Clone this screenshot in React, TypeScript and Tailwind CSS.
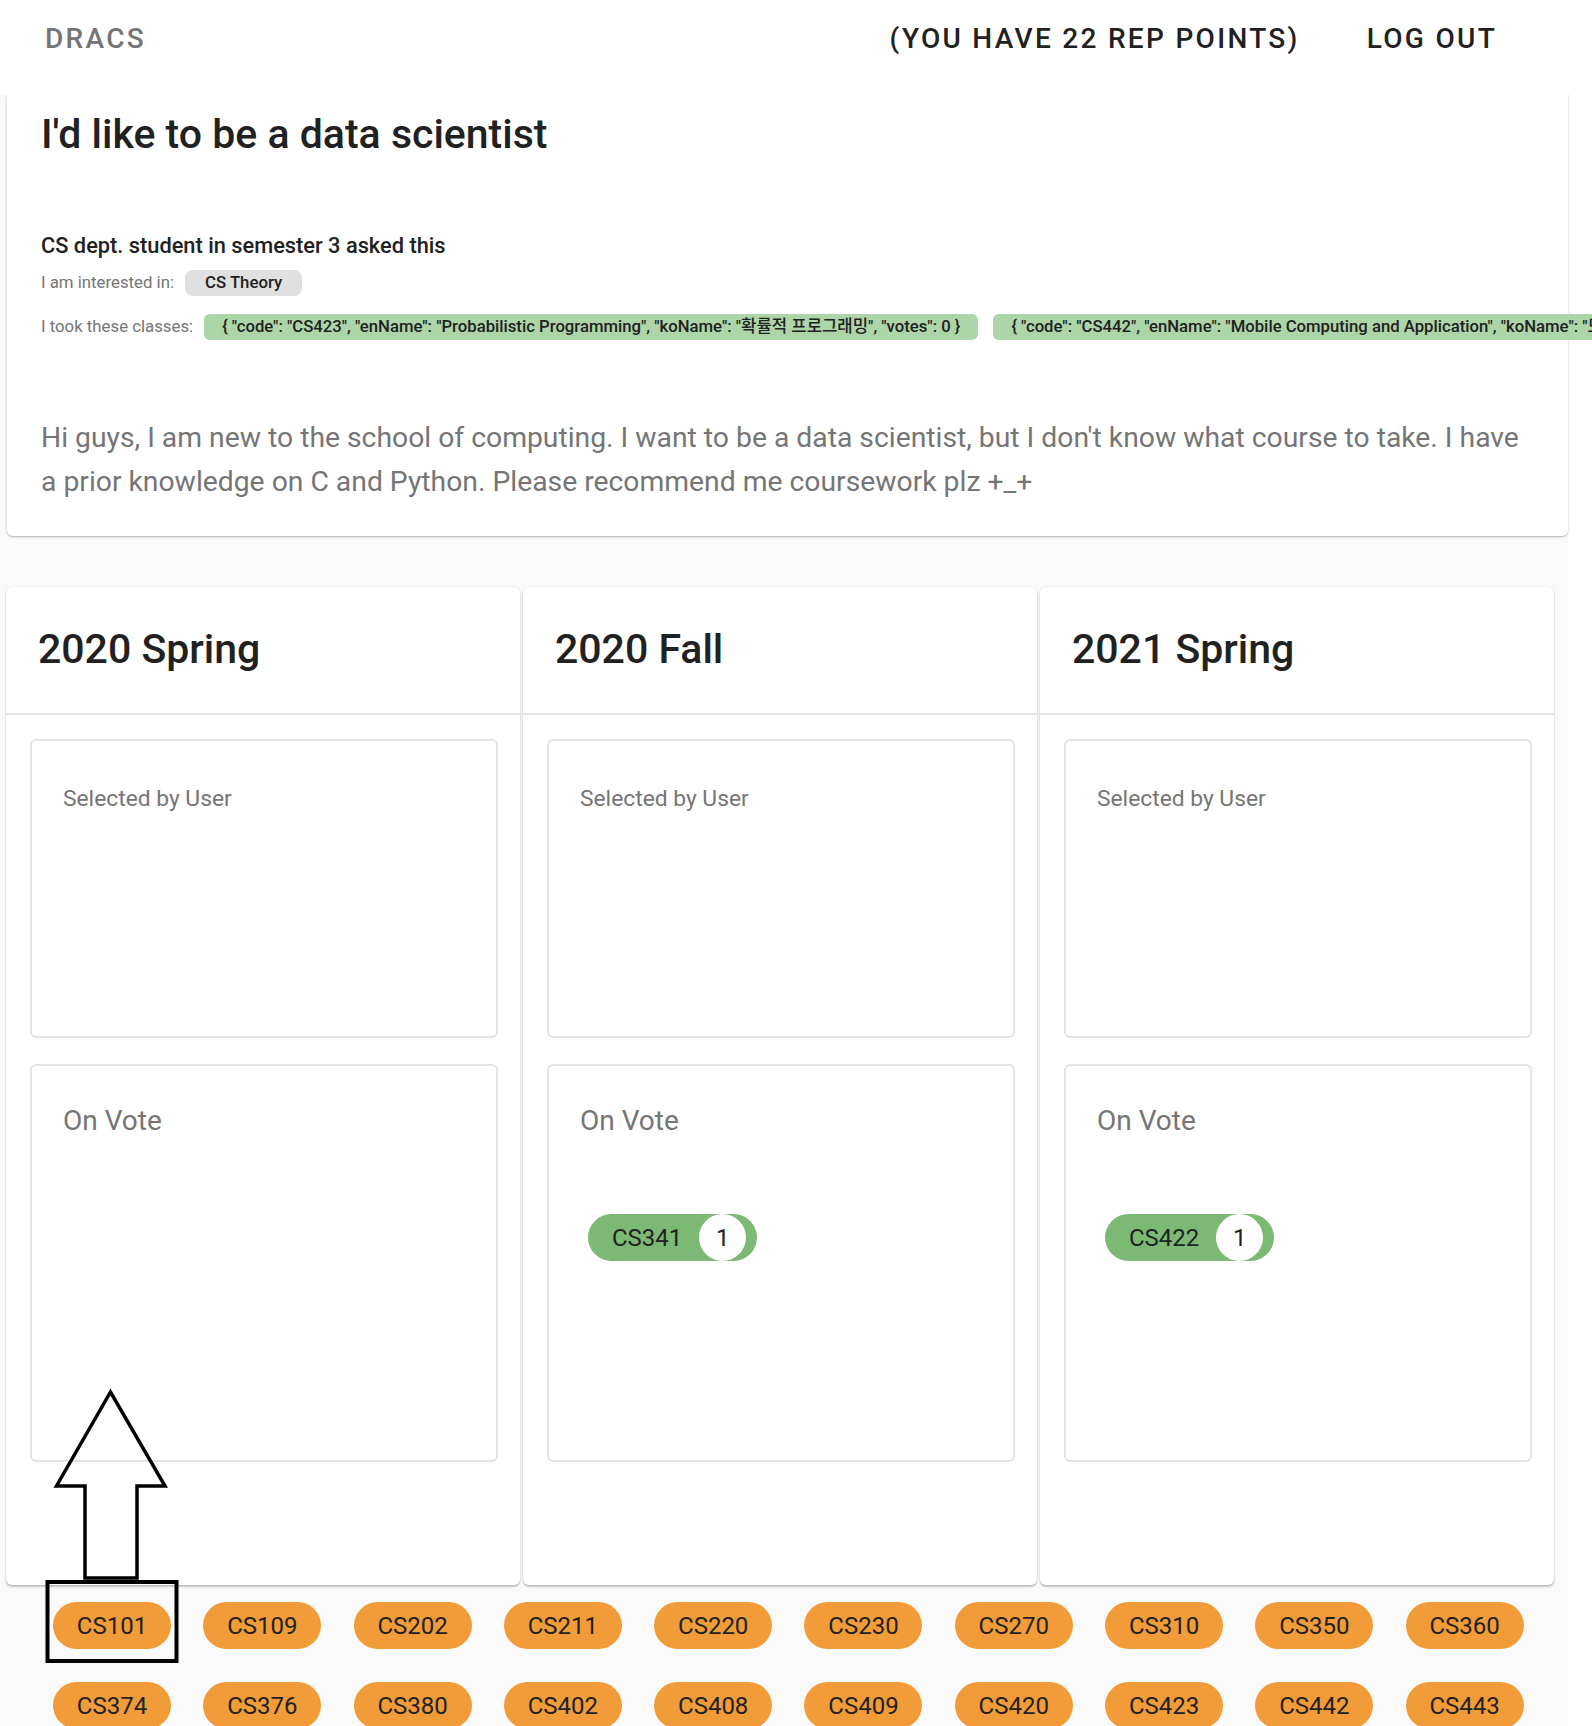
const roboto = { fontFamily: "Roboto, 'Noto Sans CJK KR', sans-serif" };

const semesters = [
  { name: "2020 Spring", votes: [] as { code: string; count: number }[] },
  { name: "2020 Fall", votes: [{ code: "CS341", count: 1 }] },
  { name: "2021 Spring", votes: [{ code: "CS422", count: 1 }] },
];

const courses = [
  "CS101", "CS109", "CS202", "CS211", "CS220", "CS230", "CS270", "CS310", "CS350", "CS360",
  "CS374", "CS376", "CS380", "CS402", "CS408", "CS409", "CS420", "CS423", "CS442", "CS443",
];

const takenClasses = [
  '{ "code": "CS423", "enName": "Probabilistic Programming", "koName": "확률적 프로그래밍", "votes": 0 }',
  '{ "code": "CS442", "enName": "Mobile Computing and Application", "koName": "모바일 컴퓨팅 및 응용", "votes": 0 }',
];

function Header() {
  return (
    <header className="h-[94px] bg-white relative z-10">
      <div className="h-[77px] flex items-center pl-[45px] pr-[95px]">
        <span className="text-[28px] tracking-[2.3px] text-[#757575] font-medium">DRACS</span>
        <div className="ml-auto flex items-center gap-[67px] text-[28px] tracking-[2.3px] text-[#212121] font-medium">
          <span>(YOU HAVE 22 REP POINTS)</span>
          <span>LOG OUT</span>
        </div>
      </div>
    </header>
  );
}

function QuestionCard() {
  return (
    <div className="ml-[7px] w-[1561px] bg-white rounded-b-[6px] shadow-[0_1px_3px_rgba(0,0,0,0.2),0_1px_1px_rgba(0,0,0,0.12)] pl-[34px] pt-[16px] pb-[32px]">
      <h1 className="text-[41px] leading-[48px] font-medium text-[#212121]">I'd like to be a data scientist</h1>

      <div className="mt-[74px] text-[21.8px] leading-[28px] font-medium text-[#212121]">
        CS dept. student in semester 3 asked this
      </div>

      <div className="mt-[10px] flex items-center h-[26px]">
        <span className="text-[16.8px] text-[#757575]">I am interested in:</span>
        <span className="ml-[11px] h-[26px] px-[20px] flex items-center rounded-[8px] bg-[#e0e0e0] text-[16.8px] font-medium text-[#212121]">
          CS Theory
        </span>
      </div>

      <div className="mt-[18px] flex items-center h-[26px] whitespace-nowrap">
        <span className="text-[16.8px] text-[#757575]">I took these classes:</span>
        <div className="ml-[11px] flex gap-[15px]">
          {takenClasses.map((c) => (
            <span
              key={c}
              className="h-[26px] px-[18px] flex items-center rounded-[6px] bg-[#acd5a8] text-[16.7px] font-medium text-[#212121]"
            >
              {c}
            </span>
          ))}
        </div>
      </div>

      <p className="mt-[76px] w-[1494px] text-[28.3px] leading-[44px] text-[#757575]">
        Hi guys, I am new to the school of computing. I want to be a data scientist, but I don't know what course to take. I have a prior knowledge on C and Python. Please recommend me coursework plz +_+
      </p>
    </div>
  );
}

function VoteChip({ code, count }: { code: string; count: number }) {
  return (
    <div className="inline-flex items-center h-[47px] rounded-full bg-[#7cb974] pl-[24px] pr-[11px]">
      <span className="text-[24px] text-[#212121]">{code}</span>
      <span className="ml-[17px] w-[47px] h-[47px] rounded-full bg-white flex items-center justify-center text-[24px] text-[#212121]">
        {count}
      </span>
    </div>
  );
}

function SemesterCard({ name, votes }: { name: string; votes: { code: string; count: number }[] }) {
  return (
    <div className="h-[998px] bg-white rounded-[6px] shadow-[0_2px_2px_rgba(0,0,0,0.22),0_0_2px_rgba(0,0,0,0.12)] flex flex-col">
      <div className="h-[128px] border-b-2 border-[#e4e4e4] flex items-center pl-[32px]">
        <h2 className="text-[41px] font-medium text-[#212121]">{name}</h2>
      </div>
      <div className="ml-[24px] mr-[22px] mt-[24px] h-[299px] border-2 border-[#e3e3e3] rounded-[6px] pl-[31px] pt-[42px]">
        <div className="text-[22.8px] leading-[32px] text-[#757575]">Selected by User</div>
      </div>
      <div className="ml-[24px] mr-[22px] mt-[26px] h-[398px] border-2 border-[#e3e3e3] rounded-[6px] pl-[31px] pt-[34px]">
        <div className="text-[28px] leading-[42px] text-[#757575]">On Vote</div>
        <div className="mt-[72px] pl-[8px] flex flex-wrap gap-3">
          {votes.map((v) => (
            <VoteChip key={v.code} code={v.code} count={v.count} />
          ))}
        </div>
      </div>
    </div>
  );
}

export default function App() {
  return (
    <div className="relative w-[1592px] min-h-[1726px] bg-white overflow-hidden" style={roboto}>
      <Header />
      <main className="w-[1568px] bg-[#fafafa] pb-[40px]">
        <QuestionCard />

        <div className="mt-[51px] ml-[6px] w-[1548px] grid grid-cols-3 gap-[3px]">
          {semesters.map((s) => (
            <SemesterCard key={s.name} name={s.name} votes={s.votes} />
          ))}
        </div>

        <div className="mt-[17px] pl-[53px] flex flex-wrap gap-x-[32.3px] gap-y-[33px]">
          {courses.map((c) => (
            <span
              key={c}
              className="w-[118px] h-[47px] rounded-full bg-[#f19c38] flex items-center justify-center text-[24px] text-[#212121]"
            >
              {c}
            </span>
          ))}
        </div>
      </main>

      {/* annotation arrow pointing at the first course */}
      <svg className="absolute top-0 left-0 pointer-events-none" width="1592" height="1726" viewBox="0 0 1592 1726">
        <path
          d="M110.5 1392 L56.5 1486 L85 1486 L85 1578 L137 1578 L137 1486 L165 1486 Z"
          fill="none"
          stroke="#000"
          strokeWidth="3.5"
          strokeLinejoin="miter"
        />
        <rect x="47.5" y="1582" width="129" height="79" fill="none" stroke="#000" strokeWidth="4" />
      </svg>
    </div>
  );
}
